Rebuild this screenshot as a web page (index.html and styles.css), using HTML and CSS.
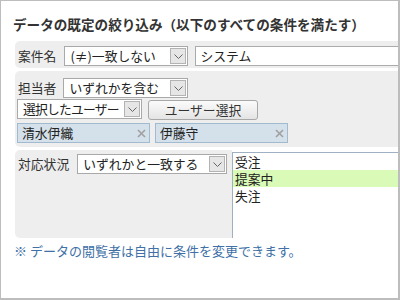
FILE: index.html
```html
<!DOCTYPE html>
<html lang="ja">
<head>
    <meta charset="UTF-8">
    <title>データの既定の絞り込み</title>
    <link rel="stylesheet" href="styles.css">
</head>
<body>
    <div class="frame">
        <h2 class="title">データの既定の絞り込み（以下のすべての条件を満たす）</h2>

        <!-- 案件名 -->
        <div class="cond cond-name">
            <span class="cond-label">案件名</span>
            <div class="select sel-name">
                <span class="select-text">(≠)一致しない</span>
                <span class="select-btn"><svg width="9" height="5" viewBox="0 0 9 5"><polyline points="0.5,0.5 4.5,4.5 8.5,0.5" fill="none" stroke="#666" stroke-width="1"/></svg></span>
            </div>
            <div class="textbox">システム</div>
        </div>

        <!-- 担当者 -->
        <div class="cond cond-user">
            <div class="line">
                <span class="cond-label">担当者</span>
                <div class="select sel-match">
                    <span class="select-text">いずれかを含む</span>
                    <span class="select-btn"><svg width="9" height="5" viewBox="0 0 9 5"><polyline points="0.5,0.5 4.5,4.5 8.5,0.5" fill="none" stroke="#666" stroke-width="1"/></svg></span>
                </div>
            </div>
            <div class="line line-pick">
                <div class="select sel-users">
                    <span class="select-text">選択したユーザー</span>
                    <span class="select-btn"><svg width="9" height="5" viewBox="0 0 9 5"><polyline points="0.5,0.5 4.5,4.5 8.5,0.5" fill="none" stroke="#666" stroke-width="1"/></svg></span>
                </div>
                <button class="btn">ユーザー選択</button>
            </div>
            <div class="line line-tags">
                <span class="tag">清水伊織<svg class="tag-x" width="9" height="9" viewBox="0 0 9 9"><path d="M1 1L8 8M8 1L1 8" stroke="#a0a0a0" stroke-width="1.6"/></svg></span>
                <span class="tag">伊藤守<svg class="tag-x" width="9" height="9" viewBox="0 0 9 9"><path d="M1 1L8 8M8 1L1 8" stroke="#a0a0a0" stroke-width="1.6"/></svg></span>
            </div>
        </div>

        <!-- 対応状況 -->
        <div class="cond-status">
            <div class="status-box">
                <span class="cond-label">対応状況</span>
                <div class="select sel-status">
                    <span class="select-text">いずれかと一致する</span>
                    <span class="select-btn"><svg width="9" height="5" viewBox="0 0 9 5"><polyline points="0.5,0.5 4.5,4.5 8.5,0.5" fill="none" stroke="#666" stroke-width="1"/></svg></span>
                </div>
            </div>
            <ul class="listbox">
                <li>受注</li>
                <li class="selected">提案中</li>
                <li>失注</li>
            </ul>
        </div>

        <p class="note">※ データの閲覧者は自由に条件を変更できます。</p>
    </div>
</body>
</html>
```

FILE: styles.css
```css
body {
    margin: 0;
    font-family: "Noto Sans CJK JP", "Noto Sans", sans-serif;
    color: #333;
    background: #fff;
}

.frame {
    width: 400px;
    height: 300px;
    box-sizing: border-box;
    border: 1px solid #bdbdbd;
    border-right-width: 2px;
    border-bottom-width: 2px;
    padding: 13px 0 0 12px;
    overflow: hidden;
}

.title {
    margin: 0 0 7px;
    font-size: 13.6px;
    font-weight: bold;
    line-height: 20px;
    color: #333;
}

.cond {
    margin-left: 2px;
    margin-bottom: 3px;
    background: #eeeeee;
    border-radius: 5px 0 0 5px;
}

.cond-label {
    font-size: 12.8px;
    line-height: 20px;
    margin-right: 8px;
    white-space: nowrap;
}

.cond-name {
    display: flex;
    align-items: center;
    padding: 5px 0 2px 3px;
}

.select {
    display: flex;
    align-items: center;
    box-sizing: border-box;
    height: 20px;
    background: #fff;
    border: 1px solid #a9a9a9;
    flex-shrink: 0;
}

.select-text {
    flex: 1;
    padding-left: 5px;
    font-size: 12.8px;
    line-height: 18px;
    color: #222;
    white-space: nowrap;
    overflow: hidden;
}

.select-btn {
    display: flex;
    align-items: center;
    justify-content: center;
    box-sizing: border-box;
    width: 16px;
    height: 16px;
    margin: 0 1px;
    background: #e6e6e6;
    border: 1px solid #b3b3b3;
}

.sel-name { width: 124px; }
.sel-match { width: 125px; }
.sel-users { width: 125px; }
.sel-status { width: 150px; }

.sel-users .select-text {
    letter-spacing: -0.8px;
}

.textbox {
    flex: 1;
    box-sizing: border-box;
    height: 20px;
    margin-left: 7px;
    margin-right: -10px;
    padding-left: 4px;
    background: #fff;
    border: 1px solid #ababab;
    font-size: 12.8px;
    line-height: 18px;
    color: #222;
}

.cond-user {
    padding: 7px 0 4px 2px;
}

.line {
    display: flex;
    align-items: flex-start;
}

.cond-user .cond-label {
    margin-left: 1px;
    margin-right: 7px;
}

.line-pick {
    margin-top: 1px;
}

.btn {
    box-sizing: border-box;
    width: 110px;
    height: 20px;
    margin: 1px 0 0 6px;
    padding: 0;
    border: 1px solid #a8a8a8;
    border-radius: 3px;
    background: linear-gradient(#fbfbfb, #e4e4e4);
    font-family: inherit;
    font-size: 12.8px;
    line-height: 18px;
    color: #333;
}

.line-tags {
    margin-top: 3px;
    gap: 5px;
}

.tag {
    display: flex;
    align-items: center;
    justify-content: space-between;
    box-sizing: border-box;
    width: 133px;
    height: 20px;
    padding: 0 3px 0 4px;
    background: #d4e0ea;
    border: 1px solid #a2bad0;
    font-size: 12.8px;
    line-height: 18px;
    color: #222;
}

.cond-status {
    display: flex;
    margin-left: 2px;
    height: 88px;
}

.status-box {
    display: flex;
    align-items: flex-start;
    box-sizing: border-box;
    width: 217px;
    padding: 4px 0 0 3px;
    background: #eeeeee;
    border-radius: 5px 0 0 5px;
}

.listbox {
    flex: 1;
    margin: 2px -10px 0 0;
    padding: 0;
    list-style: none;
    background: #fff;
    border: 1px solid #9fb0c3;
    border-bottom: none;
}

.listbox li {
    height: 17px;
    padding-left: 2px;
    font-size: 12.8px;
    line-height: 17px;
    color: #222;
}

.listbox li.selected {
    background: #d9fbb7;
}

.note {
    margin: 3px 0 0 1px;
    font-size: 13px;
    line-height: 20px;
    color: #4070a6;
}
```
